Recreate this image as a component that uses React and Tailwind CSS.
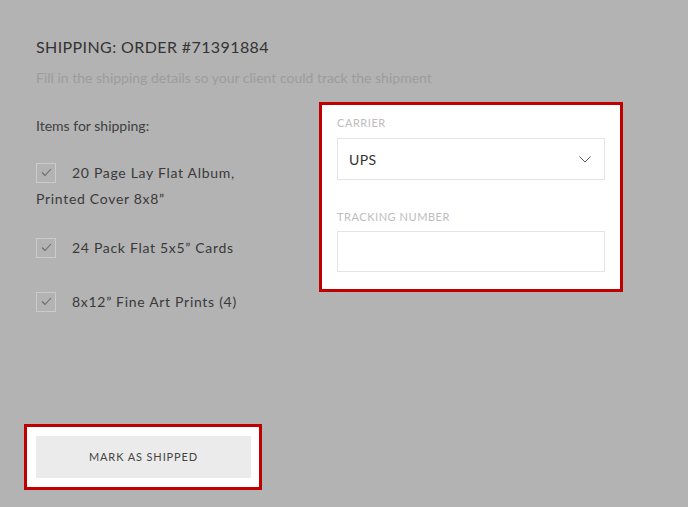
import React from 'react'

const items = [
  { label: '20 Page Lay Flat Album, Printed Cover 8x8\u201D', gap: 'mt-[24px]' },
  { label: '24 Pack Flat 5x5\u201D Cards', gap: 'mt-[23px]' },
  { label: '8x12\u201D Fine Art Prints (4)', gap: 'mt-[28px]' },
]

function Check() {
  return (
    <span className="inline-flex items-center justify-center w-[20px] h-[20px] border border-[#cbcbcb] align-middle mr-[16px] -mt-[3px]">
      <svg width="11" height="9" viewBox="0 0 11 9" fill="none">
        <path d="M1 4.5 L4 7.5 L10 1" stroke="#6a6a6a" strokeWidth="1.1" />
      </svg>
    </span>
  )
}

function App() {
  return (
    <div className="w-[688px] h-[507px] bg-[#b3b3b3] pt-[35px] pl-[36px] overflow-hidden" style={{ fontFamily: 'Lato, "Open Sans", sans-serif' }}>
      <h1 className="text-[16px] leading-6 tracking-[0.025em] text-[#333]">SHIPPING: ORDER #71391884</h1>
      <p className="mt-[9px] text-[14px] leading-5 text-[#9c9c9c]">
        Fill in the shipping details so your client could track the shipment
      </p>

      <div className="flex items-start h-[190px] mt-[14px]">
        <div className="w-[283px] pt-[14px]">
          <p className="text-[14px] leading-5 text-[#404040]">Items for shipping:</p>
          {items.map((item) => (
            <p key={item.label} className={`${item.gap} w-[215px] text-[14px] leading-[26px] tracking-[0.05em] text-[#3a3a3a]`}>
              <Check />
              {item.label}
            </p>
          ))}
        </div>

        <div className="w-[304px] h-[190px] border-[3px] border-[#c00000] bg-white px-[15px] pt-[10px]">
          <label className="block text-[11px] leading-4 tracking-[0.05em] text-[#bdbdbd]">CARRIER</label>
          <div className="mt-[7px] w-[268px] h-[42px] border border-[#e4e4e4] flex items-center justify-between pl-[11px] pr-[13px]">
            <span className="text-[14px] tracking-[0.03em] text-[#333]">UPS</span>
            <svg width="12" height="7" viewBox="0 0 12 7" fill="none">
              <path d="M0.5 0.5 L6 6 L11.5 0.5" stroke="#555" strokeWidth="1" />
            </svg>
          </div>
          <label className="block mt-[29px] text-[11px] leading-4 tracking-[0.05em] text-[#bdbdbd]">TRACKING NUMBER</label>
          <div className="mt-[6px] w-[268px] h-[41px] border border-[#e4e4e4]" />
        </div>
      </div>

      <div className="mt-[132px] -ml-[12px] w-[238px] h-[66px] border-[3px] border-[#c00000] bg-white pt-[9px] pl-[9px]">
        <button className="w-[215px] h-[42px] bg-[#ebebeb] text-[11px] tracking-[0.08em] text-[#444]">
          MARK AS SHIPPED
        </button>
      </div>
    </div>
  )
}

export default App
